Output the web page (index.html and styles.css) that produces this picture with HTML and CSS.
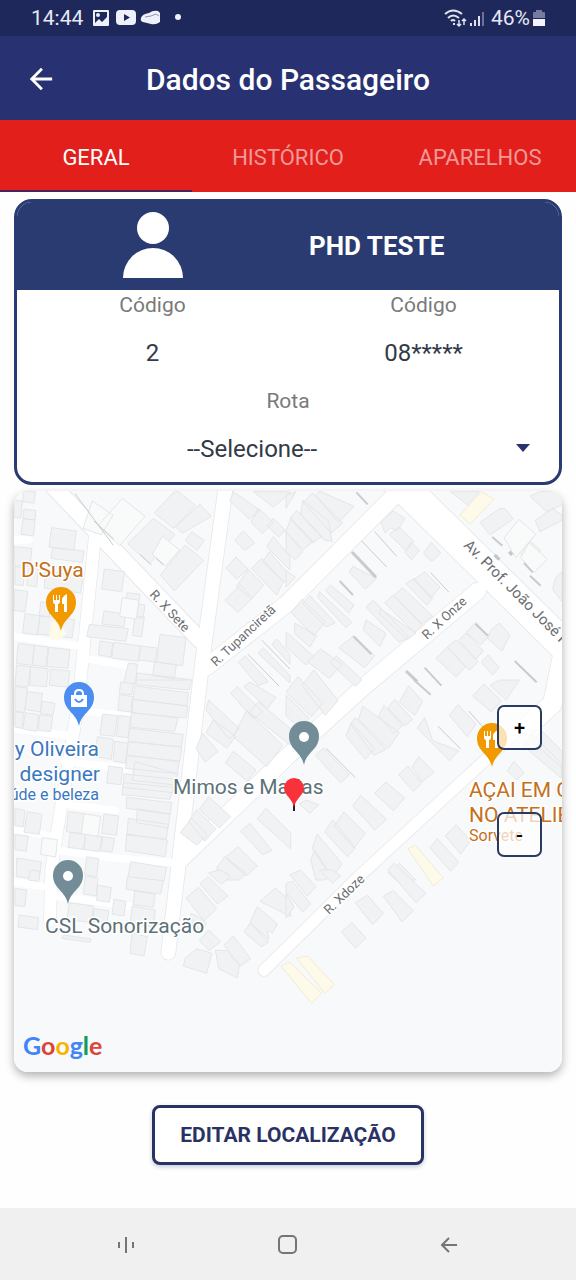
FILE: index.html
```
<!DOCTYPE html>
<html lang="pt-BR">
<head>
    <meta charset="UTF-8">
    <meta name="viewport" content="width=device-width, initial-scale=1">
    <title>Dados do Passageiro</title>
    <link rel="stylesheet" href="styles.css">
</head>
<body>
    <div class="status-bar">
        <span class="status-time">14:44</span>
        <svg class="status-left" width="90" height="20" viewBox="0 0 90 20" fill="#eef0fa" aria-hidden="true">
            <path fill-rule="evenodd" d="M2 2h14q1 0 1 1v14q0 1-1 1H2q-1 0-1-1V3q0-1 1-1zm1 2v11l4-4 3 3 5-5V4zM6 5a2 2 0 1 1 0 4 2 2 0 0 1 0-4z"/>
            <path fill-rule="evenodd" d="M28 2h12q4 0 4 4v7q0 4-4 4H28q-4 0-4-4V6q0-4 4-4zm4 4v7l6-3.500z"/>
            <path d="M49 10q1-4 8-5 4-3 9-2l2 2v9q-4 3-9 2l-8-2q-3-1-2-4z"/>
            <path d="M53 9l6-1 5-2 3 2" fill="none" stroke="#8d93b8"/>
            <circle cx="86" cy="9" r="3"/>
        </svg>
        <svg class="status-right" width="42" height="22" viewBox="0 0 42 22" fill="none" stroke="#dfe2f0" stroke-width="2" aria-hidden="true">
            <path d="M1 7q8-7 17 0M4 11q5-5 11 0M7 14q2-2 4 0"/>
            <path d="M9 17h2"/>
            <path stroke-width="1.500" d="M15 13v6m-2-2 2 2 2-2M20 18v-6m-2 2 2-2 2 2"/>
            <path d="M27 19v-3M31 19v-6M35 19V9"/>
            <path d="M39 19V5" stroke="#6b7199"/>
        </svg>
        <span class="status-battery">46%</span>
        <svg width="12" height="18" viewBox="0 0 12 18" aria-hidden="true">
            <path d="M3 1h6v2h2q1 0 1 1v5H0V4q0-1 1-1h2z" fill="#767b9f"/>
            <path d="M0 10h12v7H0z" fill="#f2f3fb"/>
        </svg>
    </div>

    <header class="app-bar">
        <button class="back-btn" aria-label="Voltar">
            <svg width="28" height="28" viewBox="0 0 28 28" fill="none" stroke="#fff" stroke-width="3" aria-hidden="true">
                <path d="M26 14H5M15 3 4 14l11 11"/>
            </svg>
        </button>
        <h1>Dados do Passageiro</h1>
    </header>

    <nav class="tabs">
        <a class="tab active" href="#geral">GERAL</a>
        <a class="tab" href="#historico">HISTÓRICO</a>
        <a class="tab" href="#aparelhos">APARELHOS</a>
    </nav>

    <main>
        <section class="card">
            <div class="card-header">
                <svg class="avatar" width="60" height="68" viewBox="0 0 60 68" fill="#fff" aria-hidden="true">
                    <circle cx="30" cy="16" r="16"/>
                    <path d="M0 66a30 30 0 0 1 60 0z"/>
                </svg>
                <h2>PHD TESTE</h2>
            </div>
            <dl class="codes">
                <div>
                    <dt>Código</dt>
                    <dd>2</dd>
                </div>
                <div>
                    <dt>Código</dt>
                    <dd>08*****</dd>
                </div>
            </dl>
            <label class="route-label" for="rota">Rota</label>
            <div class="route">
                <select id="rota">
                    <option>--Selecione--</option>
                </select>
                <svg width="16" height="8" viewBox="0 0 16 8" fill="#2a3270" aria-hidden="true"><path d="M1 0h14L8 8z"/></svg>
            </div>
        </section>

        <section class="map">
            <svg class="map-canvas" viewBox="0 0 548 581">
                <rect width="548" height="581" fill="#f8f9fb"/>
                <defs>
                    <g id="roads">
                        <path stroke-width="48" d="M100-32 558 447"/>
                        <path stroke-width="42" d="M636-20 570 472 556 587 492 1137 463 1385"/>
                        <path stroke-width="50" d="M575 530 816 340 1165-10"/>
                        <path stroke-width="92" d="M1150-30 1680 492"/>
                        <path stroke-width="50" d="M1391 300 1046 590 816 800 500 1105"/>
                        <path stroke-width="34" d="M1650 590 1316 897 1031 1160 750 1438"/>
                        <path stroke-width="56" d="M1650 470 1615 640 1560 690"/>
                        <path stroke-width="36" d="M243 135 198 582 188 667 138 967 112 1137 108 1290"/>
                        <path stroke-width="22" d="M-20 434 195 465M200 500 345 525M-20 147H45M-20 712 175 735M185 655 350 678M150 812 335 832M150 940 305 958M-20 1010 130 1040M130 1078 290 1100 480 1115M-20 1170 110 1190M125 1215 345 1245"/>
                    </g>
                </defs>
                <!-- blocks and streets use a grid three times finer than the labels -->
                <g transform="scale(.33333)" stroke-linejoin="round">
                    <g fill="none" stroke-linecap="round">
                        <g stroke="#e6e8eb">
                            <path stroke-width="54" d="M97-35 558 447"/>
                            <path stroke-width="97" d="M1150-30 1680 492"/>
                            <path stroke-width="47" d="M636-20 570 472 556 587 492 1137 463 1385"/>
                            <path stroke-width="55" d="M575 530 816 340 1165-10M1391 300 1046 590 816 800 500 1105"/>
                            <path stroke-width="39" d="M1650 590 1316 897 1031 1160 750 1438"/>
                            <path stroke-width="61" d="M1650 470 1615 640 1560 690"/>
                            <path stroke-width="40" d="M243 135 198 582 188 667 138 967 112 1137 108 1290"/>
                        </g>
                        <use href="#roads" stroke="#fff"/>
                    </g>

                    <g class="houses" transform="translate(-42 -18)">
                        <path d="M70 20h36l-4 34-34-4zM42 45l25 4-4 50-21-3zM72 72l36 5-3 28-36-4zM69 101l36 4-4 48-38-5zM155 128l74 10-7 58-75-10zM158 188l94 10-5 34-94-12zM42 185l54 5-6 55-48-4zM45 245l30 4-5 53-25-3zM85 250l30 3-5 52-30-4zM135 260l115 12-9 52-108-15zM42 314l42 5-9 62-33-5zM122 350l30 4-4 42-30-4zM75 386l45 6-8 58-44-6zM120 392l104 12-8 55-104-12zM55 475l48 6-6 60-48-6zM103 481l41 5-6 60-41-6zM146 487l64 7-6 56-63-5zM50 540l42 5-8 60-39-4zM92 545l53 6-6 54-50-4zM152 552l58 6-7 48-55-5z"/>
                        <path d="M313 252l60 8-8 60-60-8zM382 323l38 5-7 45-40-5zM413 356l22 4-6 40-24-4zM312 378l66 9-6 38-66-8zM405 392l28 4-8 60-28-5zM268 418l117 13-8 38-117-14zM300 468l38 6-5 42-38-6zM342 472l80 11-7 46-80-10zM422 483l50 6-6 42-50-6zM480 448l78 10-10 84-78-10zM464 530l65 9-6 42-65-9zM385 534l28 4-8 60-34-4zM412 564l160 20-5 22-160-12z"/>
                        <path d="M460 100l65 48-76 88-66-60zM555 180l56 46-88 92-42-48zM535 20l52 42-66 68-58-46 60-64zM600 58l34 36-86 50-22-18zM575 140l38 26-22 30-35-28zM730 138l34 36-30 22-30-30zM708 216l36 36-34 30-32-32zM720 300l38 38-44 44-40-36zM745 254l46 46-36 42-46-38zM785 220l65 70-20 40-76-80zM808 200l60 70-16 22-64-62zM820 155l50 60v40l-70-70zM775 70l46 42-34 34-34-34zM700 20l80 56-32 26-58-54zM760 20l60 46 50-40v-6zM820 100l36 36-20 20-34-32z"/>
                        <path d="M735 512l70 78-30 12-60-70zM790 488l80 84v22l-96-90zM830 462l40 46v30l-54-60z"/>
                    </g>
                    <g class="houses" transform="translate(816 -18)">
                        <path d="M0 30l30-10-30 50zM50 45l78 64 10 60-24-4-70-76zM80 24l90 90-34 30-84-92zM100 18l104 46-46 48-70-80zM15 100l66 70-30 24-52-54zM32 76l76 78-28 20-68-74zM0 140l50 60-22 24-28-24zM0 255l28 22-28 30zM285 112l36-34 36 22-24 38-20-10-16 16zM340 126l44 44-26 26-48-48zM375 172l26 24-24 28-20-22zM436 172l28 32-26 26-26-24zM200 244l72 36-34 32-48-50zM48 343l70 68-34 42-68-70zM72 332l76 82-28 12-70-70zM100 320l98 92-18 16-84-90zM134 300l70 60-16 24-70-68zM26 414l66 38-20 34-46-40zM0 440l84 76-24 24-60-54zM204 452l62 60-30 36-78-60zM262 346l106 110-28 16-100-106zM240 405l60 40-18 40-50-50zM284 372l106 72-26 20-84-78zM320 330l90 92-24 20-90-88zM350 308l90 86-32 22-84-84zM384 280l56 60-18 20-62-64zM416 260l46 46-28 34-50-56z"/>
                        <path d="M104 492l64 46-38 42-66-50zM150 512l78 72-20 20-74-70zM570 412l38 42-24 26-44-38zM640 414l32 36-24 48-44-38 10-24zM540 444l52 54-22 24-52-56zM510 464l66 66-26 26-66-70zM484 486l54 60-28 30-60-56zM606 510l34 38-20 22-34-38zM656 70l26 32-70 48-30-38 60-42zM720 158l45 38-32 40-40-40zM540 20h40l-36 40-50-40zM760 20h68v40l-46 20-50-46zM800 70l28 20v16l-66 34-14-34zM808 280l20-20v90l-28-36z"/>
                    </g>
                    <g class="houses" transform="translate(-42 567)">
                        <path d="M45 20l37 4-8 74-29-5zM82 35l45 5-6 56-46-8zM127 64l38 6-6 36-38-6zM45 95l26 4-5 46-21-4zM76 98l40 6-6 50-42-7zM120 104l38 5-6 46-38-4zM308 102l44 5-8 62-44-5zM356 106l36 5-8 62-34-4zM292 170l48 8-6 60-48-8zM344 184l40 5-8 60-36-6zM326 258l42 6-6 50-42-5zM362 6l38 4-4 34-38-3zM358 44l42 6-4 46-42-5zM410 0h165l-8 30-160-16zM404 18l162 20-6 40-160-20zM396 58l168 20-6 36-165-16zM394 98l140 16-10 40-132-12zM388 145l162 18-6 38-160-16zM385 185l160 16-5 42-160-16zM380 225l158 20-6 36-155-16zM405 245l128 36-6 34-130-14zM372 282l155 16-8 40-150-16zM370 308l150 14-10 36-144-14zM380 352l135 16-4 35-132-18zM412 386l98 16-6 42-95-16zM385 415l120 18-6 44-118-12zM380 462l122 18-6 50-120-18zM392 545l108 18-8 40H382z"/>
                        <path d="M205 395l50 6-8 62-48-8zM312 402l44 6-7 58-44-6zM212 456l46 6-8 46-46-6zM256 462l50 8-8 44-46-6zM308 470l36 6-8 40-34-4zM82 395l44 8-8 60-46-6zM45 385l30 6-5 50-25-4zM45 464l40 4-6 45-34-4zM50 534l75 12-8 52-67-8zM260 530l36 6-6 54-36-6z"/>
                        <path d="M626 60l92 86-30 32-70-88zM712 20l76 76-28 20-68-76zM750 6l78 46-26 34-70-66zM640 120l68 50-28 34-62-46zM608 160l46 54-38 32-28-40zM740 92l108 104-48 64-100-90zM775 65l95 80v50l-122-98zM700 214l68 56-26 34-66-56zM590 390l58 56-34 38-48-60zM626 350l66 60-34 34-60-56zM575 414l46 50-30 32-50-38zM750 430l66 82-28 12-66-70zM798 385l74 74v48l-100-90zM714 500l58 58-34 30-62-56zM674 530l64 50-20 20h-54l-14-36z"/>
                    </g>
                    <g class="houses" transform="translate(816 567)">
                        <path d="M36-10l74 80-34 40-76-74zM84-30l72 92-38 44-70-90zM0 45l70 70-30 28-40-36zM230 78l110 80-34 48-88-88zM196 128l70 78-28 32-58-70zM208 112l92 96-36 18-70-94zM294 76l56 60-26 24-46-52zM326 58l54 60-24 20-50-54zM368 18l42 46-24 42-46-40zM88 226l24-22 78 80-26 24zM128 78M416 112l24 70 78 30-28 30-96-98zM516 74l54 58-26 38-54-64zM594 12l52 50-30 34-56-48zM640 0h60l-40 60-48-44zM736 160l90 90v44l-114-96zM765 150l64 64v50l-90-80zM684 244l30 34-22 22-28-28zM366 258l40 52-24 24-44-50zM398 230l46 46-36 30-30-44zM224 346l78 72-36 32-66-72zM300 306l56 48-34 38-56-52zM60 360l38 14-26 26-32-28zM174 396l64 64-34 44-60-66zM140 420l68 84-24 26-68-74zM94 462l74 90-30 40-60-86zM86 510l50 80-20 10H90l-16-60zM454 476l64 70-24 28-62-70zM510 434l44 48-30 40-46-54zM340 550l50 50h-60l-24-22z"/>
                    </g>
                    <g class="houses" transform="translate(-42 1137)">
                        <path d="M45 55l35 5-6 50-29-4zM58 135l58 8-4 36-58-8zM90 0l30 4-4 30-30-4zM256 18l38 6-6 54-38-6zM292 45l42 8-6 44-38-6zM342 88l36 6-6 44-36-6zM208 98l72 10-5 50-74-10zM282 116l44 6-5 36-42-4zM382 20l108 12-8 40-104-14zM404 64l62 8-6 40-60-8zM396 108l70 12-7 50-68-10zM396 190l46 10-10 58-42-8zM190 195l84 12-4 10-84-12z"/>
                        <path d="M596 52l54 64-38 36-54-68zM624 20l60 58-32 24-52-60zM660 0l32 18-28 26-38-36zM626 180l36 34-34 28-30-30zM556 264l34-28 46 14-16 60-70-22zM646 240l34 2 38 46-6 36-56-28zM700 198l52 68-30 22-50-62zM750 160l56 56-22 14-52-44zM772 110l60 52-14 26-16-6 4 26-56-50zM826 54l46 40v46l-92-46zM572 130l24 10 24 20-14 22-28-18z"/>
                    </g>
                    <g class="houses" transform="translate(816 1137)">
                        <path d="M44 0l46 50-26 28-52-64zM20 34l54 68-24 24-50-60v-26zM0 70l24 40-24 34zM100 0h40l24 18-24 22zM324-20l96 90-30 28-84-98zM244 76l48 54-32 34-52-66zM292 78l30-16 60 60-34 34zM198 158l42 46-32 30-42-48z"/>
                    </g>

                    <g class="lots">
                        <path d="M235 30l62 42-35 60-55-20zM325 22l68 54-76 88-65-60zM445 135l52 42-42 48-40-35zM325 320l50 8-8 56-50-8zM1545 155l55 50-40 40-40-45zM1470 140l45-55 50 45-60 70zM210 968l50 8-8 60-50-8zM85 1040l45 6-5 52-45-8z"/>
                    </g>
                    <g class="walls">
                        <path stroke-width="9" d="M1014 183l72 76M1176 540l34 32"/>
                        <path stroke-width="6" d="M1027 4l34 36M977 270l40 42M1018 436l54 54M1384 398l38 36M1502 510l66 64M1435 138l30 26M1530 216l26 28M1548 254l32 30M1200 567l50 44M1232 530l50 54"/>
                        <path stroke-width="3" d="M1250 245l54 58M936 772l88 88M1272 706l68 68M1364 660l66 74M1043 150l75 78M1082 122l66 74M183 8l115 155M240 90l60 55M378 190l34 32M426 202l22 20M744 448l84 86M702 490l94 96"/>
                        <path stroke-width="10" stroke="#c4c6c9" d="M1442 192l14 14M1486 182l8 10"/>
                    </g>
                    <g fill="#fefaea" stroke="#f3ead0" stroke-width="3">
                        <path d="M1338 72l64-70 38 22-72 76zM1182 1073l22-10 84 98-30 24zM801 1425l26-12 96 94-30 30zM847 1401l34-6 80 86-28 26z"/>
                    </g>
                    <path d="M112 390l30 6 14 32-20 20-30-4z" fill="#fffbe8"/>
                </g>

                <g class="street">
                    <text transform="translate(135 104) rotate(47)">R. X Sete</text>
                    <text transform="translate(202 176) rotate(-43)">R. Tupanciretã</text>
                    <text transform="translate(413 149) rotate(-43)">R. X Onze</text>
                    <text transform="translate(315 424) rotate(-44)">R. Xdoze</text>
                    <text class="avenue" transform="translate(449 55) rotate(45)">Av. Prof. João José F</text>
                </g>

                <g class="place food">
                    <text x="7" y="86">D'Suya</text>
                    <text x="455" y="306">AÇAI EM CASA</text>
                    <text x="455" y="331">NO ATELIER</text>
                    <text class="kind" x="455" y="350">Sorvete</text>
                </g>
                <g class="place shop">
                    <text x="85" y="265" text-anchor="end">Suany Oliveira</text>
                    <text x="86" y="290" text-anchor="end">designer</text>
                    <text class="kind" x="85" y="309" text-anchor="end">Saúde e beleza</text>
                </g>
                <g class="place other">
                    <text x="159" y="303">Mimos e Marias</text>
                    <text x="31" y="442">CSL Sonorização</text>
                </g>

                <defs>
                    <path id="pin" d="M0 0C-3-14-15-15-15-29a15 15 0 0 1 30 0C15-15 3-14 0 0z"/>
                    <g id="cutlery" fill="#fff">
                        <path d="M-8-36h1v5h2v-5h1v5h2v-5h1v6q0 3-2 3v8h-3v-8q-2 0-2-3z"/>
                        <path d="M6-37v18H3v-8H1q-1-8 5-10z"/>
                    </g>
                </defs>
                <g transform="translate(47 140)">
                    <use href="#pin" fill="#f29900"/>
                    <use href="#cutlery"/>
                </g>
                <g transform="translate(478 276)">
                    <use href="#pin" fill="#f29900"/>
                    <use href="#cutlery"/>
                </g>
                <g transform="translate(65 235)">
                    <use href="#pin" fill="#4b8df0"/>
                    <path d="M-8-31H8v12H-8z" fill="#fff"/>
                    <path d="M-4-30v-2q0-4 4-4t4 4v2" fill="none" stroke="#fff" stroke-width="2"/>
                    <path d="M-4-27q4 6 8 0" fill="none" stroke="#4b8df0" stroke-width="2"/>
                </g>
                <g transform="translate(290 274)">
                    <use href="#pin" fill="#738d98"/>
                    <circle cy="-28" r="5" fill="#fff"/>
                </g>
                <g transform="translate(54 413)">
                    <use href="#pin" fill="#738d98"/>
                    <circle cy="-28" r="5" fill="#fff"/>
                </g>
                <path d="M279 308h2v12h-2z" fill="#222"/>
                <path d="M280 316c-2-9-10-12-10-19a10 10 0 0 1 20 0c0 7-8 10-10 19z" fill="#f8313b"/>
                <text class="google" x="9" y="564"><tspan fill="#4285f4">G</tspan><tspan fill="#db4437">o</tspan><tspan fill="#f4b400">o</tspan><tspan fill="#4285f4">g</tspan><tspan fill="#0f9d58">l</tspan><tspan fill="#db4437">e</tspan></text>
            </svg>
            <div class="zoom">
                <button class="zoom-btn">+</button>
                <button class="zoom-btn">-</button>
            </div>
        </section>

        <button class="edit-btn">EDITAR LOCALIZAÇÃO</button>
    </main>

    <footer class="system-nav">
        <button aria-label="Recentes">
            <svg width="22" height="22" viewBox="0 0 22 22" stroke="#757575" stroke-width="2" aria-hidden="true"><path d="M4 9v6M11 4v16M18 9v6"/></svg>
        </button>
        <button aria-label="Início">
            <svg width="22" height="22" viewBox="0 0 22 22" fill="none" stroke="#757575" stroke-width="2" aria-hidden="true"><rect x="2" y="3" width="17" height="17" rx="4"/></svg>
        </button>
        <button aria-label="Voltar">
            <svg width="22" height="22" viewBox="0 0 22 22" fill="none" stroke="#757575" stroke-width="2" aria-hidden="true"><path d="M18 12H3M10 5l-7 7 7 7"/></svg>
        </button>
    </footer>
</body>
</html>
```
FILE: styles.css
```
* {
    box-sizing: border-box;
}

body {
    font-family: Roboto, "Liberation Sans", sans-serif;
    background-color: #fefefe;
    margin: 0;
    min-height: 100vh;
    display: flex;
    flex-direction: column;
}

button {
    font-family: inherit;
    cursor: pointer;
}

.status-bar {
    height: 36px;
    padding: 0 31px;
    display: flex;
    align-items: center;
    background-color: #1f285a;
    color: #e6e8f4;
    font-size: 21px;
}

.status-left {
    margin-left: 9px;
}

.status-right {
    margin-left: auto;
    margin-right: 5px;
}

.status-battery {
    margin-right: 3px;
}

.app-bar {
    position: relative;
    height: 84px;
    padding-top: 2px;
    display: flex;
    align-items: center;
    justify-content: center;
    background-color: #283272;
    color: white;
}

.app-bar h1 {
    margin: 0;
    font-size: 30px;
    font-weight: 500;
}

.back-btn {
    position: absolute;
    left: 19px;
    padding: 8px;
    border: none;
    background: none;
    display: flex;
}

.back-btn svg {
    width: 28px;
    height: 26px;
}

.tabs {
    display: flex;
    background-color: #e31f1c;
}

.tab {
    flex: 1;
    height: 72px;
    padding-top: 4px;
    display: flex;
    align-items: center;
    justify-content: center;
    border-bottom: 2px solid transparent;
    color: #f09a98;
    font-size: 22px;
    text-decoration: none;
}

.tab.active {
    color: white;
    border-bottom-color: #4b2257;
}

main {
    padding: 7px 14px 40px;
    display: flex;
    flex-direction: column;
}

.card {
    border: 3px solid #2a3b72;
    border-radius: 18px;
    background-color: white;
    text-align: center;
    overflow: hidden;
}

.card-header {
    height: 88px;
    display: grid;
    grid-template-columns: 1fr 1fr;
    align-items: center;
    background-color: #2a3b72;
    color: white;
}

.avatar {
    justify-self: center;
}

.card-header h2 {
    margin: 0;
    padding-left: 21px;
    font-size: 26px;
    font-weight: 700;
    text-align: left;
}

.codes {
    margin: 0;
    display: grid;
    grid-template-columns: 1fr 1fr;
}

.codes dt,
.route-label {
    display: block;
    color: #7a7a7a;
    font-size: 21px;
    line-height: 30px;
}

.codes dd {
    margin: 0;
    color: #333a48;
    font-size: 24px;
    line-height: 66px;
}

.route {
    position: relative;
    height: 66px;
}

.route select {
    width: 100%;
    height: 66px;
    padding: 0 72px 0 0;
    border: none;
    appearance: none;
    background: none;
    color: #333a48;
    font-family: inherit;
    font-size: 24px;
    text-align: center;
    text-align-last: center;
}

.route svg {
    position: absolute;
    right: 28px;
    top: 28px;
    pointer-events: none;
}

.map {
    position: relative;
    margin-top: 6px;
    border-radius: 14px;
    box-shadow: 0 4px 10px rgba(0, 0, 0, 0.3);
}

.map-canvas {
    display: block;
    width: 100%;
    border-radius: 14px;
}

.houses {
    fill: #f1f2f4;
    stroke: #e3e5e7;
    stroke-width: 3px;
}

.lots {
    fill: #f9fafa;
    stroke: #e3e5e7;
    stroke-width: 3px;
}

.walls {
    fill: none;
    stroke: #c9cbce;
}

.street {
    fill: #6a6d70;
    font-size: 13px;
    stroke: #fff;
    stroke-width: 3px;
    paint-order: stroke;
}

.street .avenue {
    font-size: 15px;
}

.place {
    font-size: 21px;
    stroke: #fff;
    stroke-width: 3px;
    paint-order: stroke;
}

.place .kind {
    font-size: 16px;
}

.food {
    fill: #c5701a;
}

.shop {
    fill: #3a78c0;
}

.other {
    fill: #5d7178;
}

.google {
    font-family: Lato, sans-serif;
    font-size: 25px;
    font-weight: 700;
}

.zoom {
    position: absolute;
    top: 214px;
    right: 20px;
    display: flex;
    flex-direction: column;
    gap: 62px;
}

.zoom-btn {
    width: 45px;
    height: 45px;
    padding: 0;
    border: 2px solid #2a3b62;
    border-radius: 7px;
    background-color: rgba(255, 255, 255, 0.7);
    color: black;
    font-size: 20px;
    font-weight: 500;
}

.edit-btn {
    align-self: center;
    margin-top: 33px;
    height: 60px;
    padding: 0 25px;
    border: 3px solid #2a3263;
    border-radius: 8px;
    background-color: white;
    color: #2a3263;
    font-size: 21px;
    font-weight: 700;
    box-shadow: 0 2px 4px rgba(40, 50, 114, 0.25);
}

.system-nav {
    margin-top: auto;
    height: 72px;
    padding: 0 45px;
    display: flex;
    align-items: center;
    justify-content: space-around;
    background-color: #f0f0f0;
}

.system-nav button {
    padding: 10px;
    border: none;
    background: none;
    display: flex;
}
```
